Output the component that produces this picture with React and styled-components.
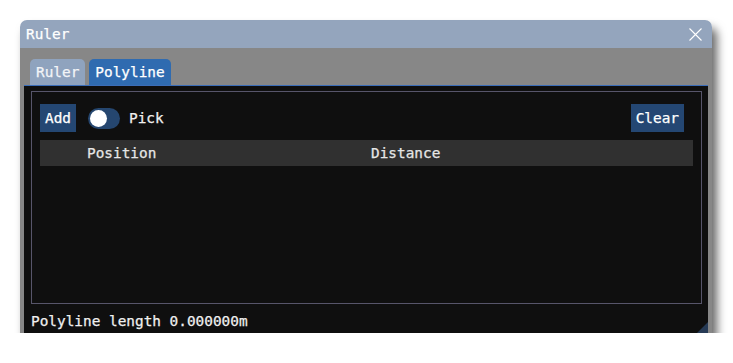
import styled, { createGlobalStyle } from "styled-components";

const GlobalStyle = createGlobalStyle`
  body {
    margin: 0;
    background: #ffffff;
    font-family: "DejaVu Sans Mono", monospace;
  }
`;

const Window = styled.div`
  position: relative;
  margin: 20px 0 0 20px;
  width: 692px;
  height: 313px;
  display: flex;
  flex-direction: column;
  border-radius: 7px 7px 0 0;
  overflow: hidden;
  box-shadow: 5px 8px 10px rgba(0, 0, 0, 0.6);
  font-size: 14.4px;
  color: #eeeeee;
  -webkit-text-stroke: 0.25px currentColor;
`;

const TitleBar = styled.div`
  height: 28px;
  flex: none;
  display: flex;
  align-items: center;
  justify-content: space-between;
  padding: 0 10px 0 6px;
  background: #94a5bd;
  color: #ffffff;
`;

const CloseButton = styled.svg`
  width: 13px;
  height: 13px;
  display: block;
`;

const Body = styled.div`
  flex: 1;
  display: flex;
  flex-direction: column;
  padding: 11px 4px 0 4px;
  background: #878787;
  min-height: 0;
`;

const TabBar = styled.div`
  display: flex;
  gap: 4px;
  padding-left: 6px;
  height: 26px;
  flex: none;
`;

const Tab = styled.div`
  display: flex;
  align-items: center;
  padding: 0 6px;
  border-radius: 5px 5px 0 0;
  background: ${(p) => (p.$active ? "#2f6bb0" : "#8fa3be")};
  color: ${(p) => (p.$active ? "#ffffff" : "#f2f4f7")};
`;

const Panel = styled.div`
  flex: 1;
  display: flex;
  flex-direction: column;
  background: #0f0f0f;
  border-top: 1px solid #3b6db8;
  padding: 5px 6px 0 7px;
  min-height: 0;
`;

const Frame = styled.div`
  height: 213px;
  flex: none;
  box-sizing: border-box;
  border: 1px solid #57556a;
  padding: 12px 8px 0 8px;
  display: flex;
  flex-direction: column;
  gap: 8px;
`;

const Toolbar = styled.div`
  display: flex;
  align-items: center;
  height: 28px;
  margin-right: 9px;
`;

const Button = styled.div`
  height: 28px;
  display: flex;
  align-items: center;
  padding: 0 5px;
  background: #244773;
  color: #ffffff;
  margin-left: ${(p) => (p.$right ? "auto" : "0")};
`;

const Toggle = styled.div`
  width: 32px;
  height: 21px;
  border-radius: 11px;
  background: #25466f;
  margin-left: 12px;
  display: flex;
  align-items: center;
  padding-left: 2px;
  box-sizing: border-box;
`;

const Knob = styled.div`
  width: 17px;
  height: 17px;
  border-radius: 50%;
  background: #ffffff;
`;

const Label = styled.span`
  margin-left: 9px;
  color: #f0f0f0;
`;

const HeaderRow = styled.div`
  height: 26px;
  display: grid;
  grid-template-columns: 42px 284px 1fr;
  align-items: center;
  background: #303030;
  color: #e6e6e6;
`;

const HeaderCell = styled.div`
  padding-left: 5px;
`;

const Footer = styled.div`
  flex: 1;
  display: flex;
  align-items: center;
  color: #f0f0f0;
  padding-top: 5px;
`;

const Grip = styled.svg`
  position: absolute;
  right: 4px;
  bottom: 0;
  width: 11px;
  height: 11px;
`;

export default function App() {
  return (
    <>
      <GlobalStyle />
      <Window>
        <TitleBar>
          <span>Ruler</span>
          <CloseButton viewBox="0 0 13 13">
            <path d="M0.5 0.5 L12.5 12.5 M12.5 0.5 L0.5 12.5" stroke="#ffffff" strokeWidth="1.1" fill="none" />
          </CloseButton>
        </TitleBar>
        <Body>
          <TabBar>
            <Tab>Ruler</Tab>
            <Tab $active>Polyline</Tab>
          </TabBar>
          <Panel>
            <Frame>
              <Toolbar>
                <Button>Add</Button>
                <Toggle>
                  <Knob />
                </Toggle>
                <Label>Pick</Label>
                <Button $right>Clear</Button>
              </Toolbar>
              <HeaderRow>
                <HeaderCell />
                <HeaderCell>Position</HeaderCell>
                <HeaderCell>Distance</HeaderCell>
              </HeaderRow>
            </Frame>
            <Footer>Polyline length 0.000000m</Footer>
          </Panel>
        </Body>
        <Grip viewBox="0 0 11 11">
          <path d="M11 0 L11 11 L0 11 Z" fill="rgba(66, 110, 170, 0.45)" />
        </Grip>
      </Window>
    </>
  );
}
